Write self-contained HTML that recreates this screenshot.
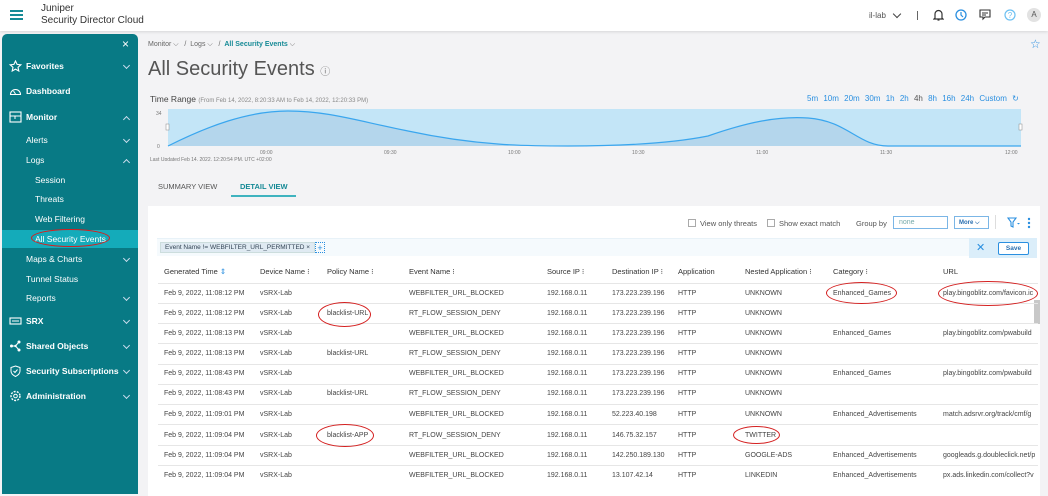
<!DOCTYPE html>
<html><head><meta charset="utf-8"><style>
*{box-sizing:border-box;margin:0;padding:0}
body{width:1048px;height:486px;overflow:hidden;background:#f3f3f5;font-family:"Liberation Sans",sans-serif;position:relative;color:#333}
.top{position:absolute;left:0;top:0;width:1048px;height:31px;background:#fff;box-shadow:0 1px 3px rgba(0,0,0,.12);z-index:2}
.abs{position:absolute}
.side{position:absolute;left:2px;top:34px;width:136px;height:460px;background:#087a85;border-radius:5px 5px 0 0;color:#fff;font-size:8.5px}
.side .it{position:absolute;left:0;width:136px;height:18px;line-height:18px}
.side b{font-weight:bold}
.side svg{position:absolute;left:7px;top:3px}
.chev{position:absolute;right:9px;top:6px;width:5px;height:5px;border-right:1px solid #cde;border-bottom:1px solid #cde;transform:rotate(45deg)}
.chev.up{transform:rotate(225deg);top:9px}
.card{position:absolute;left:148px;top:206px;width:892px;height:290px;background:#fff}
.t{position:absolute;font-size:7px;color:#444;white-space:nowrap}
.h{position:absolute;font-size:7.5px;color:#333;white-space:nowrap}
.row{position:absolute;left:158px;width:880px;height:1px;background:#e6e6e6}
.red{position:absolute;border:1.3px solid #d42020;border-radius:50%}
</style></head><body>
<div class="top">
 <div class="abs" style="left:10px;top:10px;width:13px;height:2px;background:#168a96;box-shadow:0 4px 0 #168a96,0 8px 0 #168a96"></div>
 <div class="abs" style="left:41px;top:3px;font-size:10px;color:#333;line-height:12px">Juniper<br>Security Director Cloud</div>
 <div class="abs" style="left:869px;top:11px;font-size:8px;color:#555">il-lab</div>
 <div class="abs" style="left:894px;top:11px;width:6px;height:6px;border-right:1.5px solid #444;border-bottom:1.5px solid #444;transform:rotate(45deg)"></div>
 <div class="abs" style="left:917px;top:11px;width:1px;height:9px;background:#666"></div>
 <svg class="abs" style="left:933px;top:9px" width="11" height="12" viewBox="0 0 11 12"><path d="M2 9V5a3.5 3.5 0 0 1 7 0v4l1 1H1zM4.5 11h2" fill="none" stroke="#333" stroke-width="1.2"/></svg>
 <svg class="abs" style="left:955px;top:9px" width="12" height="12"><circle cx="6" cy="6" r="5" fill="none" stroke="#2a8fe0" stroke-width="1.3"/><path d="M6 3v3l2 2" fill="none" stroke="#2a8fe0" stroke-width="1.2"/></svg>
 <svg class="abs" style="left:979px;top:9px" width="12" height="12"><path d="M1 1h10v7H6l-2 2V8H1z" fill="none" stroke="#333" stroke-width="1.1"/><path d="M3 4h6M3 6h4" stroke="#333"/></svg>
 <svg class="abs" style="left:1004px;top:9px" width="12" height="12"><circle cx="6" cy="6" r="5" fill="none" stroke="#6cc0f2" stroke-width="1.2"/><text x="6" y="9" font-size="8" text-anchor="middle" fill="#6cc0f2" font-family="Liberation Sans">?</text></svg>
 <div class="abs" style="left:1027px;top:8px;width:14px;height:14px;border-radius:50%;background:#e2e2e2;font-size:8px;text-align:center;line-height:14px;color:#555">A</div>
</div>
<div class="side">
 <div class="abs" style="left:120px;top:3px;font-size:12px;color:#fff">×</div>
 <div class="it" style="top:23px"><svg width="13" height="12"><path d="M6.5 1l1.6 3.4 3.7.4-2.8 2.5.8 3.7-3.3-1.9-3.3 1.9.8-3.7L1.2 4.8l3.7-.4z" fill="none" stroke="#fff" stroke-width="1.1"/></svg><b style="position:absolute;left:24px">Favorites</b><i class="chev"></i></div>
 <div class="it" style="top:48px"><svg width="13" height="12"><path d="M1.5 9.5a5 5 0 1 1 10 0z" fill="none" stroke="#fff" stroke-width="1.1"/><path d="M6.5 9L4.5 6" stroke="#fff"/></svg><b style="position:absolute;left:24px">Dashboard</b></div>
 <div class="it" style="top:74px"><svg width="13" height="12"><rect x="1" y="1" width="11" height="10" fill="none" stroke="#fff" stroke-width="1.1"/><path d="M1 5h5v3M6 5h6" stroke="#fff" fill="none"/></svg><b style="position:absolute;left:24px">Monitor</b><i class="chev up"></i></div>
 <div class="it" style="top:97px"><span style="position:absolute;left:24px">Alerts</span><i class="chev"></i></div>
 <div class="it" style="top:117px"><span style="position:absolute;left:24px">Logs</span><i class="chev up"></i></div>
 <div class="it" style="top:137px"><span style="position:absolute;left:33px">Session</span></div>
 <div class="it" style="top:156px"><span style="position:absolute;left:33px">Threats</span></div>
 <div class="it" style="top:176px"><span style="position:absolute;left:33px">Web Filtering</span></div>
 <div class="it" style="top:196px;background:#14abba"><span style="position:absolute;left:33px">All Security Events</span></div>
 <div class="it" style="top:216px"><span style="position:absolute;left:24px">Maps &amp; Charts</span><i class="chev"></i></div>
 <div class="it" style="top:236px"><span style="position:absolute;left:24px">Tunnel Status</span></div>
 <div class="it" style="top:255px"><span style="position:absolute;left:24px">Reports</span><i class="chev"></i></div>
 <div class="it" style="top:278px"><svg width="13" height="12"><rect x="1" y="3" width="11" height="6" fill="none" stroke="#fff" stroke-width="1.1"/><path d="M3 6h7" stroke="#fff"/></svg><b style="position:absolute;left:24px">SRX</b><i class="chev"></i></div>
 <div class="it" style="top:303px"><svg width="13" height="12"><circle cx="2.5" cy="6" r="1.5" fill="#fff"/><circle cx="10" cy="2" r="1.5" fill="#fff"/><circle cx="10" cy="10" r="1.5" fill="#fff"/><circle cx="6.5" cy="6" r="1.2" fill="#fff"/><path d="M2.5 6h4l3.5-4M6.5 6l3.5 4" stroke="#fff" fill="none"/></svg><b style="position:absolute;left:24px">Shared Objects</b><i class="chev"></i></div>
 <div class="it" style="top:328px"><svg width="13" height="12"><path d="M6.5 1l4.5 1.5v3.5c0 3-2.5 4.5-4.5 5.5-2-1-4.5-2.5-4.5-5.5V2.5z" fill="none" stroke="#fff" stroke-width="1"/><path d="M4.5 6l1.5 1.5 2.5-3" stroke="#fff" fill="none"/></svg><b style="position:absolute;left:24px">Security Subscriptions</b><i class="chev"></i></div>
 <div class="it" style="top:353px"><svg width="13" height="12"><circle cx="6.5" cy="6" r="4.5" fill="none" stroke="#fff" stroke-width="1.4" stroke-dasharray="2 1.2"/><circle cx="6.5" cy="6" r="1.8" fill="none" stroke="#fff"/></svg><b style="position:absolute;left:24px">Administration</b><i class="chev"></i></div>
</div>
<div class="red" style="left:31px;top:229px;width:79px;height:18px"></div>
<div class="abs" style="left:148px;top:41px;font-size:7px;color:#666">Monitor ⌵ &nbsp; / &nbsp;Logs ⌵ &nbsp; / &nbsp;<b style="color:#168a96">All Security Events</b> ⌵</div>
<div class="abs" style="left:1030px;top:37px;font-size:12px;color:#2a8fe0">☆</div>
<div class="abs" style="left:148px;top:58px;font-size:20px;color:#555">All Security Events <span style="font-size:10px;color:#777">ⓘ</span></div>
<div class="abs" style="left:150px;top:94px;font-size:8.5px;color:#444">Time Range <span style="font-size:6px;color:#888">(From Feb 14, 2022, 8:20:33 AM to Feb 14, 2022, 12:20:33 PM)</span></div>
<div class="abs" style="left:807px;top:94px;font-size:8px;color:#2a8fe0;word-spacing:3px">5m 10m 20m 30m 1h 2h <span style="color:#555">4h</span> 8h 16h 24h Custom ↻</div>
<svg class="abs" style="left:148px;top:106px" width="875" height="55">
 <rect x="20" y="3" width="853" height="37" fill="#c3e5f7"/>
 <path d="M20 40 C60 20 100 5 140 5 C180 5 210 15 260 25 C330 40 380 40 420 40 C470 40 520 38 560 30 C600 16 630 10 660 12 C700 15 710 40 740 40 L873 40 L873 40 L20 40Z" fill="#b4d6ec"/>
 <path d="M20 40 C60 20 100 5 140 5 C180 5 210 15 260 25 C330 40 380 40 420 40 C470 40 520 38 560 30 C600 16 630 10 660 12 C700 15 710 40 740 40 L873 40" fill="none" stroke="#3aa6ee" stroke-width="1.2"/>
 <rect x="18" y="18" width="3" height="6" fill="#fff" stroke="#888" stroke-width=".5"/><rect x="871" y="18" width="3" height="6" fill="#fff" stroke="#888" stroke-width=".5"/>
 <g font-size="5" fill="#777" font-family="Liberation Sans"><text x="8" y="9">34</text><text x="9" y="42">0</text><text x="112" y="48">09:00</text><text x="236" y="48">09:30</text><text x="360" y="48">10:00</text><text x="484" y="48">10:30</text><text x="608" y="48">11:00</text><text x="732" y="48">11:30</text><text x="857" y="48">12:00</text><text x="2" y="55">Last Updated  Feb 14, 2022, 12:20:54 PM, UTC +02:00</text></g>
</svg>
<div class="abs" style="left:158px;top:182px;font-size:7.5px;color:#555">SUMMARY VIEW</div>
<div class="abs" style="left:240px;top:182px;font-size:7.5px;color:#168a96;font-weight:bold">DETAIL VIEW</div>
<div class="abs" style="left:231px;top:195px;width:65px;height:2px;background:#3fb3bf"></div>
<div class="card"></div>
<div class="abs" style="left:688px;top:219px;width:8px;height:8px;border:1px solid #aaa"></div>
<div class="abs" style="left:700px;top:219px;font-size:7.5px;color:#555">View only threats</div>
<div class="abs" style="left:767px;top:219px;width:8px;height:8px;border:1px solid #aaa"></div>
<div class="abs" style="left:779px;top:219px;font-size:7.5px;color:#555">Show exact match</div>
<div class="abs" style="left:856px;top:219px;font-size:7.5px;color:#555">Group by</div>
<div class="abs" style="left:893px;top:216px;width:55px;height:13px;border:1px solid #7bb6e6;font-size:7px;color:#7aa;padding:2px 5px">none</div>
<div class="abs" style="left:954px;top:216px;width:35px;height:13px;border:1px solid #7bb6e6;font-size:6px;color:#2a6fb0;padding:3px 4px;font-weight:bold">More ⌵</div>
<div class="abs" style="left:995px;top:215px;width:1px;height:14px;background:#ddd"></div>
<svg class="abs" style="left:1007px;top:217px" width="24" height="12"><path d="M1 1h8L6 5v5L4 9V5z" fill="none" stroke="#2a8fe0" stroke-width="1.1"/><path d="M10 6l1.5 1.5L13 6" fill="#2a8fe0"/><circle cx="22" cy="2" r="1.2" fill="#2a8fe0"/><circle cx="22" cy="6" r="1.2" fill="#2a8fe0"/><circle cx="22" cy="10" r="1.2" fill="#2a8fe0"/></svg>
<div class="abs" style="left:157px;top:238px;width:880px;height:18px;background:#f5fafd;border-top:1px solid #e8f2f8"></div>
<div class="abs" style="left:969px;top:238px;width:68px;height:20px;background:#dbeefa"></div>
<div class="abs" style="left:160px;top:242px;height:11px;padding:0 4px;background:#dfeaf2;border:1px solid #cdd;font-size:6.5px;line-height:10px;color:#345">Event Name != WEBFILTER_URL_PERMITTED ×</div>
<div class="abs" style="left:315px;top:242px;width:10px;height:11px;border:1px dotted #2a8fe0;font-size:9px;line-height:10px;text-align:center;color:#2a8fe0">+</div>
<div class="abs" style="left:976px;top:241px;font-size:11px;color:#2a8fe0">✕</div>
<div class="abs" style="left:998px;top:242px;width:31px;height:13px;border:1px solid #2a8fe0;background:#fff;border-radius:2px;font-size:6.5px;text-align:center;line-height:11px;color:#2a6fb0;font-weight:bold">Save</div>
<div class="h" style="left:164px;top:267px">Generated Time <span style="color:#2a8fe0">⇕</span></div>
<div class="h" style="left:260px;top:267px">Device Name ⁝</div>
<div class="h" style="left:327px;top:267px">Policy Name ⁝</div>
<div class="h" style="left:409px;top:267px">Event Name ⁝</div>
<div class="h" style="left:547px;top:267px">Source IP ⁝</div>
<div class="h" style="left:612px;top:267px">Destination IP ⁝</div>
<div class="h" style="left:678px;top:267px">Application</div>
<div class="h" style="left:745px;top:267px">Nested Application ⁝</div>
<div class="h" style="left:833px;top:267px">Category ⁝</div>
<div class="h" style="left:943px;top:267px">URL</div>
<div class="abs" style="left:1034px;top:300px;width:6px;height:24px;background:#c8c8c8"></div>
<div class="row" style="top:283px"></div>
<div class="t" style="left:164px;top:290px">Feb 9, 2022, 11:08:12 PM</div><div class="t" style="left:260px;top:290px">vSRX-Lab</div><div class="t" style="left:409px;top:290px">WEBFILTER_URL_BLOCKED</div><div class="t" style="left:547px;top:290px">192.168.0.11</div><div class="t" style="left:612px;top:290px">173.223.239.196</div><div class="t" style="left:678px;top:290px">HTTP</div><div class="t" style="left:745px;top:290px">UNKNOWN</div><div class="t" style="left:833px;top:290px">Enhanced_Games</div><div class="t" style="left:943px;top:290px">play.bingoblitz.com/favicon.ic</div>
<div class="row" style="top:303px"></div>
<div class="t" style="left:164px;top:310px">Feb 9, 2022, 11:08:12 PM</div><div class="t" style="left:260px;top:310px">vSRX-Lab</div><div class="t" style="left:327px;top:310px">blacklist-URL</div><div class="t" style="left:409px;top:310px">RT_FLOW_SESSION_DENY</div><div class="t" style="left:547px;top:310px">192.168.0.11</div><div class="t" style="left:612px;top:310px">173.223.239.196</div><div class="t" style="left:678px;top:310px">HTTP</div><div class="t" style="left:745px;top:310px">UNKNOWN</div>
<div class="row" style="top:323px"></div>
<div class="t" style="left:164px;top:330px">Feb 9, 2022, 11:08:13 PM</div><div class="t" style="left:260px;top:330px">vSRX-Lab</div><div class="t" style="left:409px;top:330px">WEBFILTER_URL_BLOCKED</div><div class="t" style="left:547px;top:330px">192.168.0.11</div><div class="t" style="left:612px;top:330px">173.223.239.196</div><div class="t" style="left:678px;top:330px">HTTP</div><div class="t" style="left:745px;top:330px">UNKNOWN</div><div class="t" style="left:833px;top:330px">Enhanced_Games</div><div class="t" style="left:943px;top:330px">play.bingoblitz.com/pwabuild</div>
<div class="row" style="top:343px"></div>
<div class="t" style="left:164px;top:350px">Feb 9, 2022, 11:08:13 PM</div><div class="t" style="left:260px;top:350px">vSRX-Lab</div><div class="t" style="left:327px;top:350px">blacklist-URL</div><div class="t" style="left:409px;top:350px">RT_FLOW_SESSION_DENY</div><div class="t" style="left:547px;top:350px">192.168.0.11</div><div class="t" style="left:612px;top:350px">173.223.239.196</div><div class="t" style="left:678px;top:350px">HTTP</div><div class="t" style="left:745px;top:350px">UNKNOWN</div>
<div class="row" style="top:364px"></div>
<div class="t" style="left:164px;top:370px">Feb 9, 2022, 11:08:43 PM</div><div class="t" style="left:260px;top:370px">vSRX-Lab</div><div class="t" style="left:409px;top:370px">WEBFILTER_URL_BLOCKED</div><div class="t" style="left:547px;top:370px">192.168.0.11</div><div class="t" style="left:612px;top:370px">173.223.239.196</div><div class="t" style="left:678px;top:370px">HTTP</div><div class="t" style="left:745px;top:370px">UNKNOWN</div><div class="t" style="left:833px;top:370px">Enhanced_Games</div><div class="t" style="left:943px;top:370px">play.bingoblitz.com/pwabuild</div>
<div class="row" style="top:384px"></div>
<div class="t" style="left:164px;top:390px">Feb 9, 2022, 11:08:43 PM</div><div class="t" style="left:260px;top:390px">vSRX-Lab</div><div class="t" style="left:327px;top:390px">blacklist-URL</div><div class="t" style="left:409px;top:390px">RT_FLOW_SESSION_DENY</div><div class="t" style="left:547px;top:390px">192.168.0.11</div><div class="t" style="left:612px;top:390px">173.223.239.196</div><div class="t" style="left:678px;top:390px">HTTP</div><div class="t" style="left:745px;top:390px">UNKNOWN</div>
<div class="row" style="top:404px"></div>
<div class="t" style="left:164px;top:411px">Feb 9, 2022, 11:09:01 PM</div><div class="t" style="left:260px;top:411px">vSRX-Lab</div><div class="t" style="left:409px;top:411px">WEBFILTER_URL_BLOCKED</div><div class="t" style="left:547px;top:411px">192.168.0.11</div><div class="t" style="left:612px;top:411px">52.223.40.198</div><div class="t" style="left:678px;top:411px">HTTP</div><div class="t" style="left:745px;top:411px">UNKNOWN</div><div class="t" style="left:833px;top:411px">Enhanced_Advertisements</div><div class="t" style="left:943px;top:411px">match.adsrvr.org/track/cmf/g</div>
<div class="row" style="top:424px"></div>
<div class="t" style="left:164px;top:432px">Feb 9, 2022, 11:09:04 PM</div><div class="t" style="left:260px;top:432px">vSRX-Lab</div><div class="t" style="left:327px;top:432px">blacklist-APP</div><div class="t" style="left:409px;top:432px">RT_FLOW_SESSION_DENY</div><div class="t" style="left:547px;top:432px">192.168.0.11</div><div class="t" style="left:612px;top:432px">146.75.32.157</div><div class="t" style="left:678px;top:432px">HTTP</div><div class="t" style="left:745px;top:432px">TWITTER</div>
<div class="row" style="top:445px"></div>
<div class="t" style="left:164px;top:452px">Feb 9, 2022, 11:09:04 PM</div><div class="t" style="left:260px;top:452px">vSRX-Lab</div><div class="t" style="left:409px;top:452px">WEBFILTER_URL_BLOCKED</div><div class="t" style="left:547px;top:452px">192.168.0.11</div><div class="t" style="left:612px;top:452px">142.250.189.130</div><div class="t" style="left:678px;top:452px">HTTP</div><div class="t" style="left:745px;top:452px">GOOGLE-ADS</div><div class="t" style="left:833px;top:452px">Enhanced_Advertisements</div><div class="t" style="left:943px;top:452px">googleads.g.doubleclick.net/p</div>
<div class="row" style="top:465px"></div>
<div class="t" style="left:164px;top:472px">Feb 9, 2022, 11:09:04 PM</div><div class="t" style="left:260px;top:472px">vSRX-Lab</div><div class="t" style="left:409px;top:472px">WEBFILTER_URL_BLOCKED</div><div class="t" style="left:547px;top:472px">192.168.0.11</div><div class="t" style="left:612px;top:472px">13.107.42.14</div><div class="t" style="left:678px;top:472px">HTTP</div><div class="t" style="left:745px;top:472px">LINKEDIN</div><div class="t" style="left:833px;top:472px">Enhanced_Advertisements</div><div class="t" style="left:943px;top:472px">px.ads.linkedin.com/collect?v</div>
<div class="red" style="left:826px;top:282px;width:71px;height:22px"></div>
<div class="red" style="left:938px;top:281px;width:100px;height:25px"></div>
<div class="red" style="left:318px;top:302px;width:53px;height:25px"></div>
<div class="red" style="left:316px;top:424px;width:58px;height:23px"></div>
<div class="red" style="left:733px;top:426px;width:47px;height:18px"></div>
</body></html>
